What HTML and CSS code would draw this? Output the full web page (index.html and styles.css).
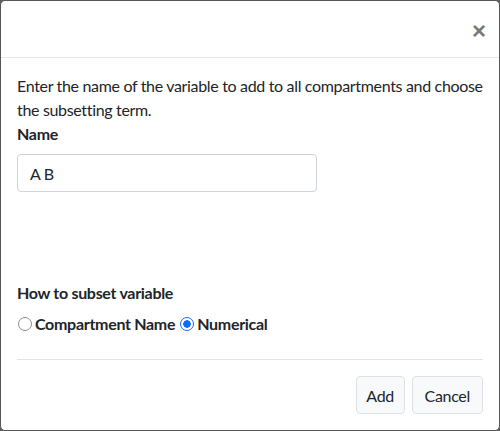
FILE: index.html
```html
<!DOCTYPE html>
<html>
<head>
<meta charset="utf-8">
<link rel="stylesheet" href="styles.css">
</head>
<body>
<div class="modal">
  <div class="modal-header">
    <button class="close" aria-label="Close">&times;</button>
  </div>
  <div class="modal-body">
    <div class="intro">Enter the name of the variable to add to all compartments and choose the subsetting term.</div>
    <label class="label" for="name">Name</label>
    <input id="name" class="input" type="text" value="A B">
    <div class="spacer"></div>
    <div class="label">How to subset variable</div>
    <div class="radios">
      <label class="radio"><span class="dot"></span>Compartment Name</label>
      <label class="radio"><span class="dot checked"></span>Numerical</label>
    </div>
    <div class="rule"></div>
    <div class="footer">
      <button class="btn">Add</button>
      <button class="btn btn-wide">Cancel</button>
    </div>
  </div>
</div>
</body>
</html>
```

FILE: styles.css
```css
html, body {
  margin: 0;
  padding: 0;
  background: #5f5f5f;
}
body {
  width: 500px;
  height: 431px;
  font-family: "Lato", "Noto Sans", sans-serif;
  font-size: 16px;
  letter-spacing: -0.3px;
  color: #212529;
}
.modal {
  box-sizing: border-box;
  width: 500px;
  height: 431px;
  background: #fff;
  border: 1px solid #555;
  border-radius: 5px;
  display: flex;
  flex-direction: column;
}
.modal-header {
  height: 56px;
  border-bottom: 1px solid #e5e5e5;
  display: flex;
  align-items: center;
  justify-content: flex-end;
  padding: 0 13px 0 16px;
}
.close {
  background: none;
  border: none;
  padding: 0;
  margin-top: 4px;
  font-family: "Liberation Sans", sans-serif;
  font-size: 24px;
  font-weight: bold;
  line-height: 1;
  color: #7a7a7a;
}
.modal-body {
  padding: 16px 16px 0 16px;
  flex: 1;
  display: flex;
  flex-direction: column;
}
.intro {
  line-height: 24px;
  letter-spacing: -0.33px;
}
.label {
  display: block;
  font-weight: bold;
  line-height: 24px;
  margin-bottom: 8px;
}
.input {
  box-sizing: border-box;
  width: 300px;
  height: 38px;
  border: 1px solid #ced4da;
  border-radius: 4px;
  padding: 6px 12px;
  font-family: inherit;
  font-size: 16px;
  letter-spacing: inherit;
  color: #212529;
}
.spacer {
  height: 89px;
}
.label + .radios { margin-top: -1px; }
.radios {
  display: flex;
  gap: 4px;
  line-height: 24px;
}
.radio {
  display: flex;
  align-items: center;
  font-weight: bold;
}
.dot {
  box-sizing: border-box;
  width: 14px;
  height: 14px;
  border-radius: 50%;
  border: 1.5px solid #8e8e94;
  margin: 0 3px 0 1px;
}
.dot.checked {
  border: 1.5px solid #0d6efd;
  background: radial-gradient(circle, #0d6efd 0 3.5px, #fff 4px);
}
.rule {
  height: 1px;
  background: #e3e3e3;
  margin-top: 23px;
}
.footer {
  display: flex;
  justify-content: flex-end;
  gap: 7px;
  margin-top: 16px;
}
.btn {
  box-sizing: border-box;
  height: 38px;
  padding: 0 9.5px;
  background: #f8f9fa;
  border: 1px solid #dee2e6;
  border-radius: 4px;
  font-family: inherit;
  font-size: 16px;
  letter-spacing: inherit;
  color: #212529;
}
.btn-wide {
  padding: 0 12px;
}
```
